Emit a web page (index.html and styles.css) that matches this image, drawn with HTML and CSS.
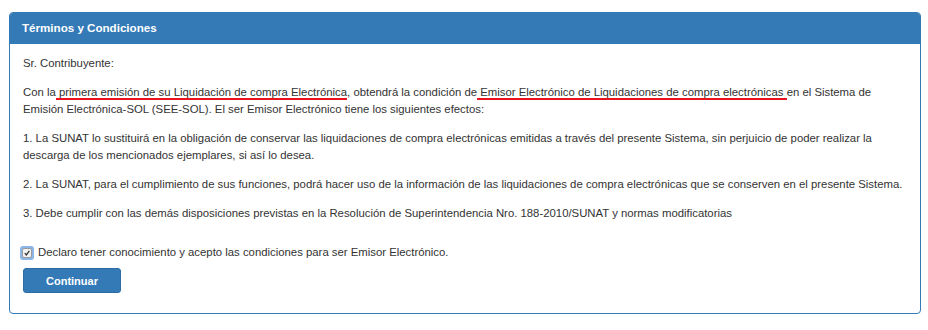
FILE: index.html
```html
<!DOCTYPE html>
<html lang="es">
<head>
  <meta charset="UTF-8" />
  <title>Términos y Condiciones</title>
  <link rel="stylesheet" href="styles.css">
</head>
<body>
  <div class="panel">
    <div class="panel-heading">Términos y Condiciones</div>
    <div class="panel-body">
      <p>Sr. Contribuyente:</p>
      <p>Con la<span class="mark"> primera emisión de su Liquidación de compra Electrónica</span>, obtendrá la condición de<span class="mark"> Emisor Electrónico de Liquidaciones de compra electrónicas </span>en el Sistema de Emisión Electrónica-SOL (SEE-SOL). El ser Emisor Electrónico tiene los siguientes efectos:</p>
      <p>1. La SUNAT lo sustituirá en la obligación de conservar las liquidaciones de compra electrónicas emitidas a través del presente Sistema, sin perjuicio de poder realizar la descarga de los mencionados ejemplares, si así lo desea.</p>
      <p>2. La SUNAT, para el cumplimiento de sus funciones, podrá hacer uso de la información de las liquidaciones de compra electrónicas que se conserven en el presente Sistema.</p>
      <p>3. Debe cumplir con las demás disposiciones previstas en la Resolución de Superintendencia Nro. 188-2010/SUNAT y normas modificatorias</p>

      <label class="accept">
        <span class="check">
          <svg width="10" height="10" viewBox="0 0 10 10"><path d="M2.2 5.2 L4.2 7.4 L7.9 2.4" fill="none" stroke="#333" stroke-width="1.6"/></svg>
        </span>
        Declaro tener conocimiento y acepto las condiciones para ser Emisor Electrónico.
      </label>

      <button class="btn">Continuar</button>
    </div>
  </div>
</body>
</html>
```

FILE: styles.css
```css
* { box-sizing: border-box; }
body { margin: 0; background: #fff; font-family: "Liberation Sans", Arial, Helvetica, sans-serif; font-size: 11.35px; color: #333; }
.panel { margin: 12px 7px 0 9px; border: 1px solid #337ab7; border-radius: 4px; background: #fff; }
.panel-heading { background: #337ab7; color: #fff; font-weight: bold; font-size: 11.6px; height: 31px; line-height: 30px; padding: 0 12px; border-radius: 3px 3px 0 0; }
.panel-body { padding: 11px 13px 20px; }
.panel-body p { margin: 0 0 12px; line-height: 17px; }
.mark { border-bottom: 2px solid #e8131b; }
.accept { display: flex; align-items: center; gap: 4px; margin: 22px 0 0 -3px; line-height: 17px; height: 17px; }
.check { width: 14px; height: 14px; border-radius: 3px; background: #8cb6e8; display: flex; align-items: center; justify-content: center; }
.check svg { background: #f2f2f2; border: 1px solid #9a9a9a; border-radius: 2px; width: 10px; height: 10px; }
.btn { display: block; margin-top: 7px; width: 98px; height: 25px; border: 1px solid #2e6da4; border-radius: 3px; background: #337ab7; color: #fff; font-family: inherit; font-size: 11px; font-weight: bold; cursor: pointer; }
```
